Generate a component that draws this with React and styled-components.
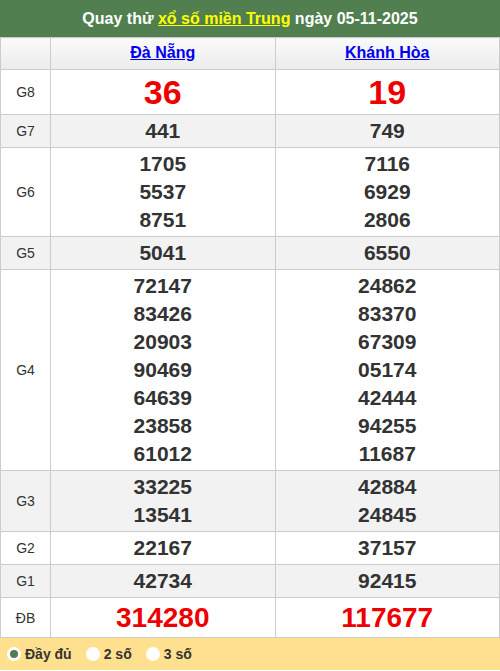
import React, { useState } from "react";
import styled, { createGlobalStyle } from "styled-components";

const GlobalStyle = createGlobalStyle`
  html, body {
    margin: 0;
    padding: 0;
    background: #fff;
    font-family: "Liberation Sans", Arial, sans-serif;
  }
`;

const Wrapper = styled.div`
  width: 500px;
`;

const Title = styled.h2`
  margin: 0;
  height: 37px;
  line-height: 37px;
  background: #517f50;
  color: #fff;
  font-size: 16px;
  font-weight: bold;
  text-align: center;
  a {
    color: #ffff00;
    text-decoration: underline;
  }
`;

const Table = styled.table`
  width: 500px;
  border-collapse: collapse;
  table-layout: fixed;
  td, th {
    border: 1px solid #ccc;
    text-align: center;
    padding: 2px 0;
  }
  th {
    background: linear-gradient(#fafafa, #ececec);
    height: 26px;
    line-height: 26px;
    padding: 2px 0 3px;
    font-size: 16px;
    font-weight: bold;
    a {
      color: #0000ee;
      text-decoration: underline;
    }
  }
  tr:nth-child(even) td {
    background: #f2f2f2;
  }
`;

const Label = styled.td`
  width: 48px;
  font-size: 14px;
  color: #333;
`;

const Numbers = styled.td`
  font-weight: bold;
  color: ${(p) => (p.$big ? "#ee0000" : "#333")};
  font-size: ${(p) => p.$size || 21}px;
  line-height: ${(p) => p.$lh || 28}px;
  div {
    height: ${(p) => p.$lh || 28}px;
  }
`;

const Footer = styled.div`
  height: 32px;
  background: #ffe08f;
  display: flex;
  align-items: center;
  gap: 14px;
  padding-left: 7px;
`;

const Option = styled.label`
  display: flex;
  align-items: center;
  gap: 4px;
  font-size: 14px;
  font-weight: bold;
  color: #333;
  cursor: pointer;
`;

const Radio = styled.span`
  width: 14px;
  height: 14px;
  border-radius: 50%;
  background: #fff;
  display: flex;
  align-items: center;
  justify-content: center;
  &::after {
    content: "";
    width: 8px;
    height: 8px;
    border-radius: 50%;
    background: ${(p) => (p.$on ? "#517f50" : "transparent")};
  }
`;

const prizes = [
  { name: "G8", a: ["36"], b: ["19"], big: true, size: 34, lh: 40 },
  { name: "G7", a: ["441"], b: ["749"] },
  { name: "G6", a: ["1705", "5537", "8751"], b: ["7116", "6929", "2806"] },
  { name: "G5", a: ["5041"], b: ["6550"] },
  {
    name: "G4",
    a: ["72147", "83426", "20903", "90469", "64639", "23858", "61012"],
    b: ["24862", "83370", "67309", "05174", "42444", "94255", "11687"],
  },
  { name: "G3", a: ["33225", "13541"], b: ["42884", "24845"] },
  { name: "G2", a: ["22167"], b: ["37157"] },
  { name: "G1", a: ["42734"], b: ["92415"] },
  { name: "ĐB", a: ["314280"], b: ["117677"], big: true, size: 28, lh: 35 },
];

const options = ["Đầy đủ", "2 số", "3 số"];

const App = () => {
  const [mode, setMode] = useState(0);
  return (
    <Wrapper>
      <GlobalStyle />
      <Title>
        Quay thử <a href="#">xổ số miền Trung</a> ngày 05-11-2025
      </Title>
      <Table>
        <thead>
          <tr>
            <th style={{ width: 49 }}></th>
            <th><a href="#">Đà Nẵng</a></th>
            <th><a href="#">Khánh Hòa</a></th>
          </tr>
        </thead>
        <tbody>
          {prizes.map((p) => (
            <tr key={p.name}>
              <Label>{p.name}</Label>
              {[p.a, p.b].map((col, i) => (
                <Numbers key={i} $big={p.big} $size={p.size} $lh={p.lh}>
                  {col.map((n) => (
                    <div key={n}>{n}</div>
                  ))}
                </Numbers>
              ))}
            </tr>
          ))}
        </tbody>
      </Table>
      <Footer>
        {options.map((o, i) => (
          <Option key={o} onClick={() => setMode(i)}>
            <Radio $on={mode === i} />
            {o}
          </Option>
        ))}
      </Footer>
    </Wrapper>
  );
};

export default App;
